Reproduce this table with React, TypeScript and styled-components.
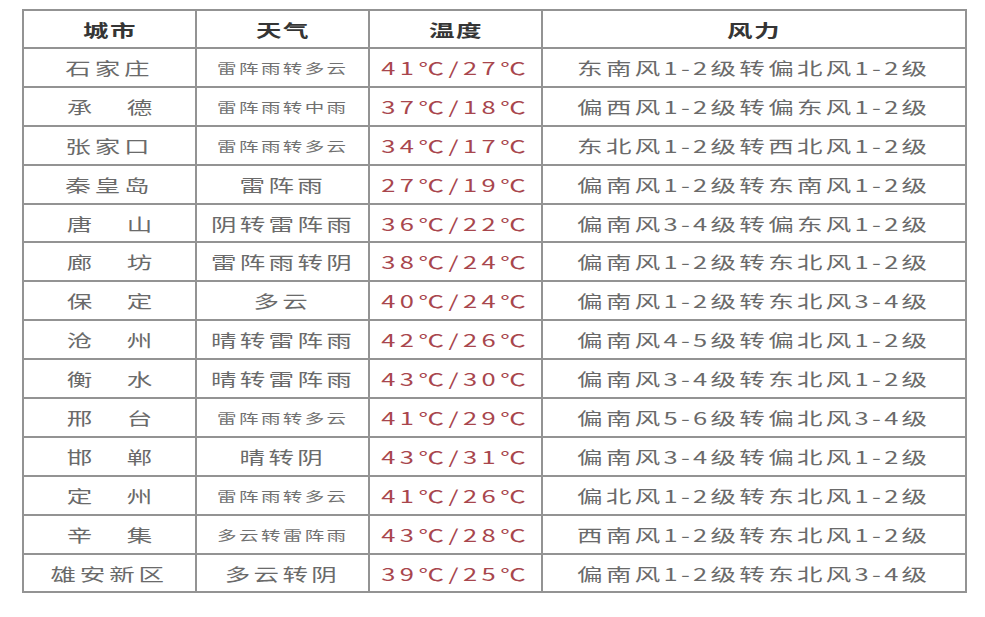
import { Fragment } from "react";
import styled, { createGlobalStyle } from "styled-components";

const GlobalStyle = createGlobalStyle`
  html, body {
    margin: 0;
    padding: 0;
    background: #ffffff;
  }
  body {
    font-family: "Noto Sans CJK SC", "Noto Sans", sans-serif;
  }
`;

type Row = {
  city: string;
  weather: string;
  small: boolean;
  temp: string;
  wind: string;
};

const rows: Row[] = [
  { city: "石家庄", weather: "雷阵雨转多云", small: true, temp: "41℃/27℃", wind: "东南风1-2级转偏北风1-2级" },
  { city: "承德", weather: "雷阵雨转中雨", small: true, temp: "37℃/18℃", wind: "偏西风1-2级转偏东风1-2级" },
  { city: "张家口", weather: "雷阵雨转多云", small: true, temp: "34℃/17℃", wind: "东北风1-2级转西北风1-2级" },
  { city: "秦皇岛", weather: "雷阵雨", small: false, temp: "27℃/19℃", wind: "偏南风1-2级转东南风1-2级" },
  { city: "唐山", weather: "阴转雷阵雨", small: false, temp: "36℃/22℃", wind: "偏南风3-4级转偏东风1-2级" },
  { city: "廊坊", weather: "雷阵雨转阴", small: false, temp: "38℃/24℃", wind: "偏南风1-2级转东北风1-2级" },
  { city: "保定", weather: "多云", small: false, temp: "40℃/24℃", wind: "偏南风1-2级转东北风3-4级" },
  { city: "沧州", weather: "晴转雷阵雨", small: false, temp: "42℃/26℃", wind: "偏南风4-5级转偏北风1-2级" },
  { city: "衡水", weather: "晴转雷阵雨", small: false, temp: "43℃/30℃", wind: "偏南风3-4级转东北风1-2级" },
  { city: "邢台", weather: "雷阵雨转多云", small: true, temp: "41℃/29℃", wind: "偏南风5-6级转偏北风3-4级" },
  { city: "邯郸", weather: "晴转阴", small: false, temp: "43℃/31℃", wind: "偏南风3-4级转偏北风1-2级" },
  { city: "定州", weather: "雷阵雨转多云", small: true, temp: "41℃/26℃", wind: "偏北风1-2级转东北风1-2级" },
  { city: "辛集", weather: "多云转雷阵雨", small: true, temp: "43℃/28℃", wind: "西南风1-2级转东北风1-2级" },
  { city: "雄安新区", weather: "多云转阴", small: false, temp: "39℃/25℃", wind: "偏南风1-2级转东北风3-4级" },
];

const LINE = "2px solid #939393";

const Page = styled.div`
  width: 985px;
  height: 617px;
  padding: 9px 0 0 22px;
  box-sizing: border-box;
`;

const Table = styled.div`
  width: 943px;
  display: grid;
  grid-template-columns: 173px 173px 173px 1fr;
  grid-template-rows: 38px repeat(14, 38.9px);
  border-top: ${LINE};
  border-left: ${LINE};
`;

const Cell = styled.div`
  display: flex;
  align-items: center;
  justify-content: center;
  border-right: ${LINE};
  border-bottom: ${LINE};
  box-sizing: border-box;
  overflow: hidden;
`;

// the source picture is stretched sideways, so every text run is widened
const Txt = styled.span<{ $size: number; $spacing: number; $color?: string; $bold?: boolean }>`
  display: inline-flex;
  transform: scaleX(1.5);
  transform-origin: center;
  white-space: nowrap;
  font-size: ${(p) => p.$size}px;
  letter-spacing: ${(p) => p.$spacing}px;
  color: ${(p) => p.$color || "#6a6a6a"};
  font-weight: ${(p) => (p.$bold ? 700 : 400)};
  line-height: 1;
`;

const Spread = styled(Txt)`
  width: 57px;
  justify-content: space-between;
  letter-spacing: 0;
`;

const headers = ["城市", "天气", "温度", "风力"];

function City({ name }: { name: string }) {
  if (name.length === 2) {
    return (
      <Spread $size={17} $spacing={0}>
        <span>{name[0]}</span>
        <span>{name[1]}</span>
      </Spread>
    );
  }
  return (
    <Txt $size={17} $spacing={2.6}>
      {name}
    </Txt>
  );
}

export default function App() {
  return (
    <>
      <GlobalStyle />
      <Page>
        <Table>
          {headers.map((h) => (
            <Cell key={h}>
              <Txt $size={17} $spacing={1} $color="#353535" $bold>
                {h}
              </Txt>
            </Cell>
          ))}
          {rows.map((r) => (
            <Fragment key={r.city}>
              <Cell>
                <City name={r.city} />
              </Cell>
              <Cell>
                {r.small ? (
                  <Txt $size={13} $spacing={1.6} $color="#717171">
                    {r.weather}
                  </Txt>
                ) : (
                  <Txt $size={17} $spacing={2.2}>
                    {r.weather}
                  </Txt>
                )}
              </Cell>
              <Cell>
                <Txt $size={17} $spacing={3} $color="#a8464d">
                  {r.temp}
                </Txt>
              </Cell>
              <Cell>
                <Txt $size={17} $spacing={2.2}>
                  {r.wind}
                </Txt>
              </Cell>
            </Fragment>
          ))}
        </Table>
      </Page>
    </>
  );
}
